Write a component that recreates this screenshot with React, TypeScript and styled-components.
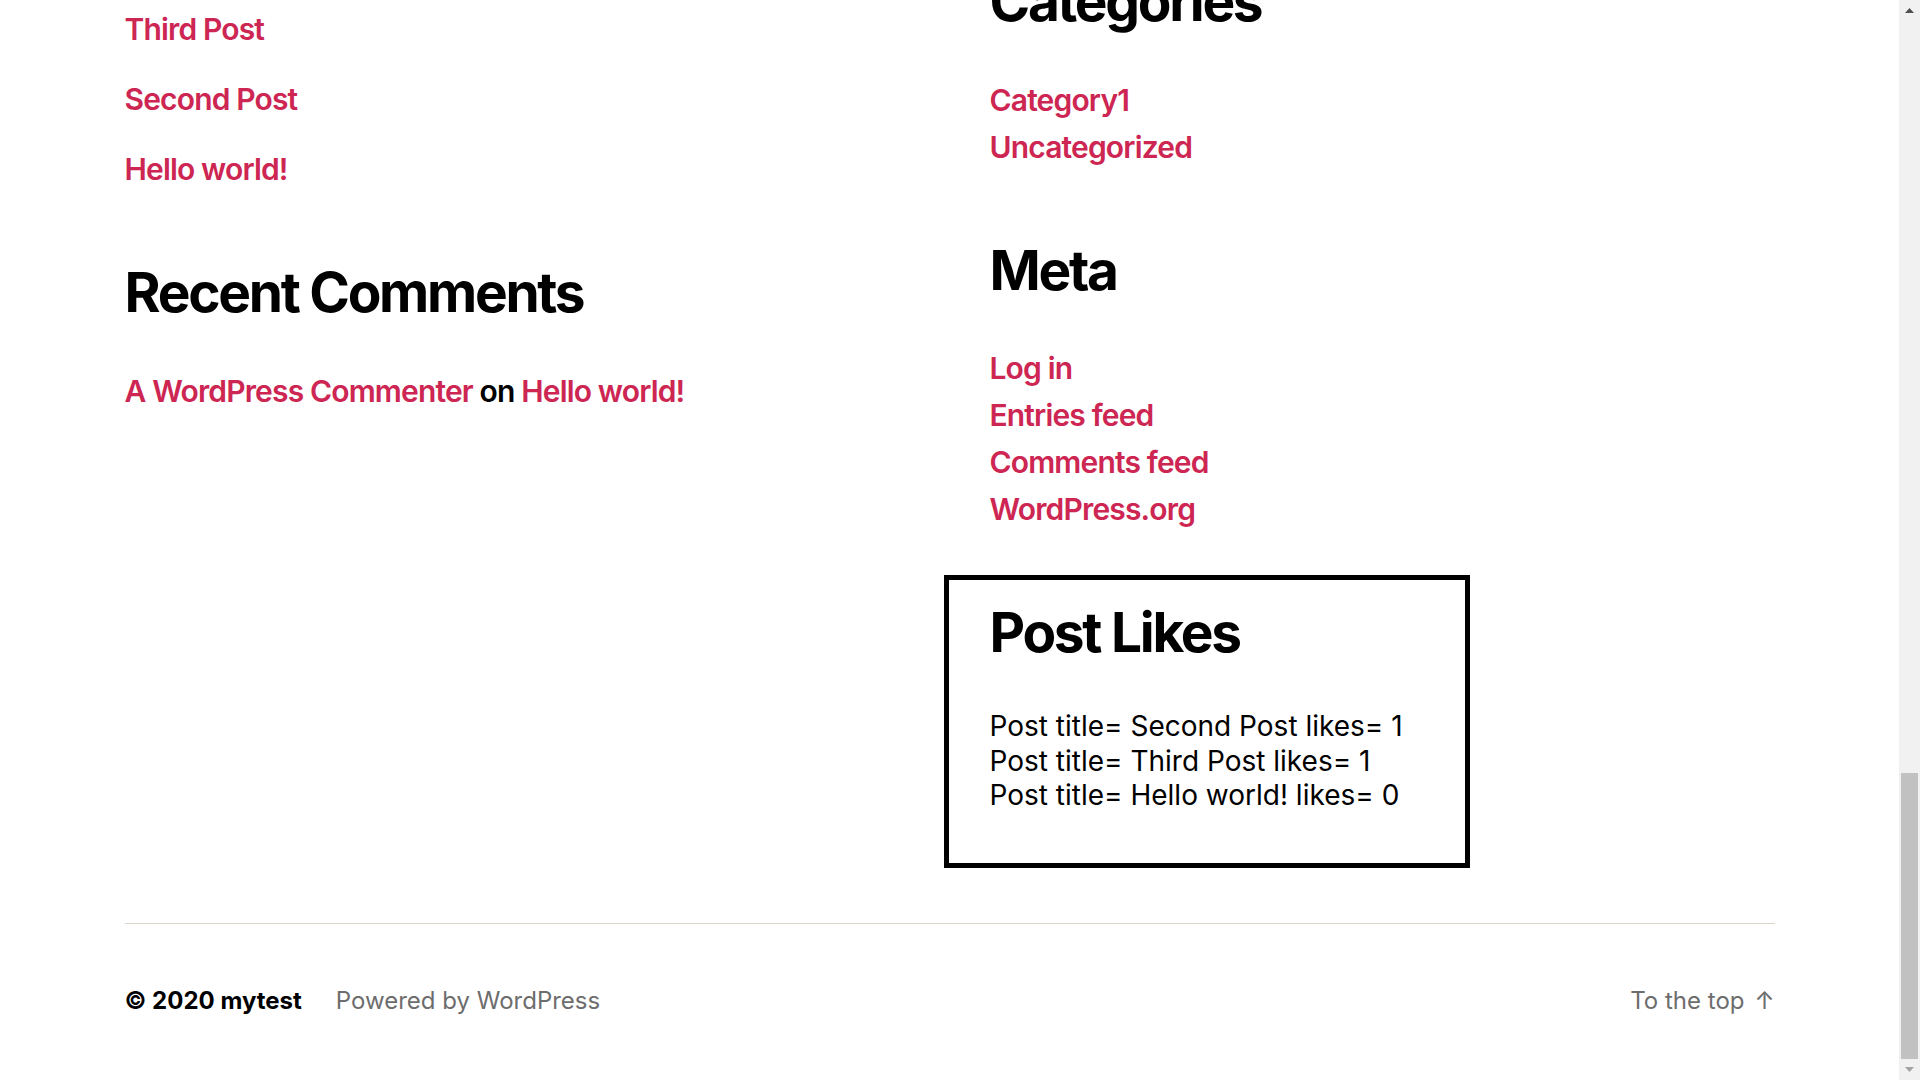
import React, { useLayoutEffect, useRef } from 'react'
import styled, { createGlobalStyle } from 'styled-components'

const accent = '#cd2653'
const muted = '#6d6d6d'
const rule = '#dcd7ca'

const GlobalStyle = createGlobalStyle`
  * { box-sizing: border-box; }
  html, body {
    margin: 0;
    padding: 0;
    overflow: hidden;
    background: #fff;
  }
  body {
    color: #000;
    font-family: Inter, "Noto Sans", "Liberation Sans", sans-serif;
    -webkit-font-smoothing: antialiased;
  }
`

const Page = styled.div`
  display: flex;
  height: 100vh;
`

const Viewport = styled.div`
  flex: 1;
  min-width: 0;
  overflow-y: scroll;
  scrollbar-width: none;
  background: #fff;

  &::-webkit-scrollbar {
    display: none;
  }
`

const Scrollbar = styled.div`
  width: 21px;
  display: flex;
  flex-direction: column;
  background: #f1f1f1;
`

const ScrollButton = styled.div`
  height: 21px;
  display: flex;
  align-items: center;
  justify-content: center;
`

const Track = styled.div`
  flex: 1;
  display: flex;
  flex-direction: column;
  justify-content: flex-end;
`

const Thumb = styled.div`
  height: 286px;
  margin: 0 2px;
  background: #c1c1c1;
`

const Inner = styled.div`
  max-width: 1650px;
  margin: 0 auto;
`

const Header = styled.header`
  height: 130px;
  display: flex;
  align-items: center;
  justify-content: space-between;
  max-width: 1650px;
  margin: 0 auto;
`

const SiteTitle = styled.div`
  font-size: 30px;
  font-weight: 700;
`

const Nav = styled.nav`
  display: flex;
  gap: 40px;
  font-size: 22px;
  font-weight: 500;
`

const Article = styled.article`
  min-height: 2364px;
  padding-top: 120px;
  text-align: center;
`

const PostTitle = styled.h1`
  margin: 0 0 60px;
  font-size: 84px;
  font-weight: 800;
  letter-spacing: -0.0415625em;
`

const PostText = styled.p`
  max-width: 730px;
  margin: 0 auto;
  font-size: 26px;
  line-height: 1.5;
  text-align: left;
`

const WidgetsGrid = styled.div`
  display: grid;
  grid-template-columns: 1fr 1fr;
  column-gap: 80px;
  align-items: start;
  padding: 100px 0 55px;
`

const Column = styled.div`
  display: flex;
  flex-direction: column;
`

const Widget = styled.section`
  & + & {
    margin-top: 65px;
  }
`

const WidgetTitle = styled.h2`
  margin: 0 0 41px;
  font-size: 55px;
  font-weight: 700;
  line-height: 1.25;
  letter-spacing: -0.0415625em;
`

const LinkList = styled.ul<{ $spaced?: boolean }>`
  list-style: none;
  margin: 0;
  padding: 0;
  font-size: 30px;
  font-weight: 600;
  line-height: 47px;
  letter-spacing: -0.028em;

  li + li {
    margin-top: ${(p) => (p.$spaced ? 23 : 0)}px;
  }
`

const Link = styled.a`
  color: ${accent};
  text-decoration: none;
`

const SearchForm = styled.form`
  height: 86px;
  display: flex;
  gap: 12px;
  align-items: stretch;
`

const SearchInput = styled.input`
  flex: 1;
  border: 1px solid ${rule};
  padding: 0 22px;
  font: inherit;
  font-size: 22px;
`

const SearchButton = styled.button`
  border: 0;
  padding: 0 34px;
  background: ${accent};
  color: #fff;
  font: inherit;
  font-size: 20px;
  font-weight: 600;
  letter-spacing: 0.0333em;
  text-transform: uppercase;
`

const LikesBox = styled.section`
  width: 526px;
  margin: 42px 0 0 -46px;
  padding: 18px 40px 50px 41px;
  border: 5px solid #000;
`

const LikesTitle = styled(WidgetTitle)`
  margin-bottom: 42px;
`

const LikesText = styled.p`
  margin: 0;
  font-size: 28px;
  font-weight: 400;
  line-height: 34.5px;
`

const Footer = styled.footer`
  display: flex;
  align-items: baseline;
  justify-content: space-between;
  padding: 59px 0 61px;
  border-top: 1px solid ${rule};
  font-size: 24px;
  line-height: 36px;
`

const Credits = styled.div`
  display: flex;
  align-items: baseline;
`

const Copyright = styled.span`
  font-weight: 700;
`

const Muted = styled.a`
  color: ${muted};
  text-decoration: none;
`

const Powered = styled(Muted)`
  margin-left: 34px;
`

const Arrow = styled.span`
  margin-left: 10px;
`

const likes = [
  { title: 'Second Post', count: 1 },
  { title: 'Third Post', count: 1 },
  { title: 'Hello world!', count: 0 },
]

function App() {
  const scroller = useRef<HTMLDivElement>(null)

  useLayoutEffect(() => {
    const el = scroller.current
    if (el) el.scrollTop = el.scrollHeight
  }, [])

  return (
    <Page>
      <GlobalStyle />
      <Viewport ref={scroller}>
        <Header>
          <SiteTitle>mytest</SiteTitle>
          <Nav>
            <Link href="#">Sample Page</Link>
          </Nav>
        </Header>
        <Article>
          <PostTitle>Hello world!</PostTitle>
          <PostText>
            Welcome to WordPress. This is your first post. Edit or delete it, then start writing!
          </PostText>
        </Article>
        <Inner>
          <WidgetsGrid>
            <Column>
              <Widget>
                <SearchForm onSubmit={(e) => e.preventDefault()}>
                  <SearchInput placeholder="Search …" />
                  <SearchButton>Search</SearchButton>
                </SearchForm>
              </Widget>
              <Widget>
                <WidgetTitle>Recent Posts</WidgetTitle>
                <LinkList $spaced>
                  <li><Link href="#">Third Post</Link></li>
                  <li><Link href="#">Second Post</Link></li>
                  <li><Link href="#">Hello world!</Link></li>
                </LinkList>
              </Widget>
              <Widget>
                <WidgetTitle>Recent Comments</WidgetTitle>
                <LinkList $spaced>
                  <li>
                    <Link href="#">A WordPress Commenter</Link> on <Link href="#">Hello world!</Link>
                  </li>
                </LinkList>
              </Widget>
            </Column>
            <Column>
              <Widget>
                <WidgetTitle>Archives</WidgetTitle>
                <LinkList>
                  <li><Link href="#">January 2020</Link></li>
                </LinkList>
              </Widget>
              <Widget>
                <WidgetTitle>Categories</WidgetTitle>
                <LinkList>
                  <li><Link href="#">Category1</Link></li>
                  <li><Link href="#">Uncategorized</Link></li>
                </LinkList>
              </Widget>
              <Widget>
                <WidgetTitle>Meta</WidgetTitle>
                <LinkList>
                  <li><Link href="#">Log in</Link></li>
                  <li><Link href="#">Entries feed</Link></li>
                  <li><Link href="#">Comments feed</Link></li>
                  <li><Link href="#">WordPress.org</Link></li>
                </LinkList>
              </Widget>
              <LikesBox>
                <LikesTitle>Post Likes</LikesTitle>
                <LikesText>
                  {likes.map((l) => (
                    <React.Fragment key={l.title}>
                      Post title= {l.title} likes= {l.count}
                      <br />
                    </React.Fragment>
                  ))}
                </LikesText>
              </LikesBox>
            </Column>
          </WidgetsGrid>
          <Footer>
            <Credits>
              <Copyright>© 2020 mytest</Copyright>
              <Powered href="#">Powered by WordPress</Powered>
            </Credits>
            <Muted href="#">
              To the top<Arrow>↑</Arrow>
            </Muted>
          </Footer>
        </Inner>
      </Viewport>
      <Scrollbar>
        <ScrollButton>
          <svg width="9" height="5" viewBox="0 0 9 5">
            <polygon points="4.5,0 9,5 0,5" fill="#505050" />
          </svg>
        </ScrollButton>
        <Track>
          <Thumb />
        </Track>
        <ScrollButton>
          <svg width="9" height="5" viewBox="0 0 9 5">
            <polygon points="0,0 9,0 4.5,5" fill="#a3a3a3" />
          </svg>
        </ScrollButton>
      </Scrollbar>
    </Page>
  )
}

export default App
